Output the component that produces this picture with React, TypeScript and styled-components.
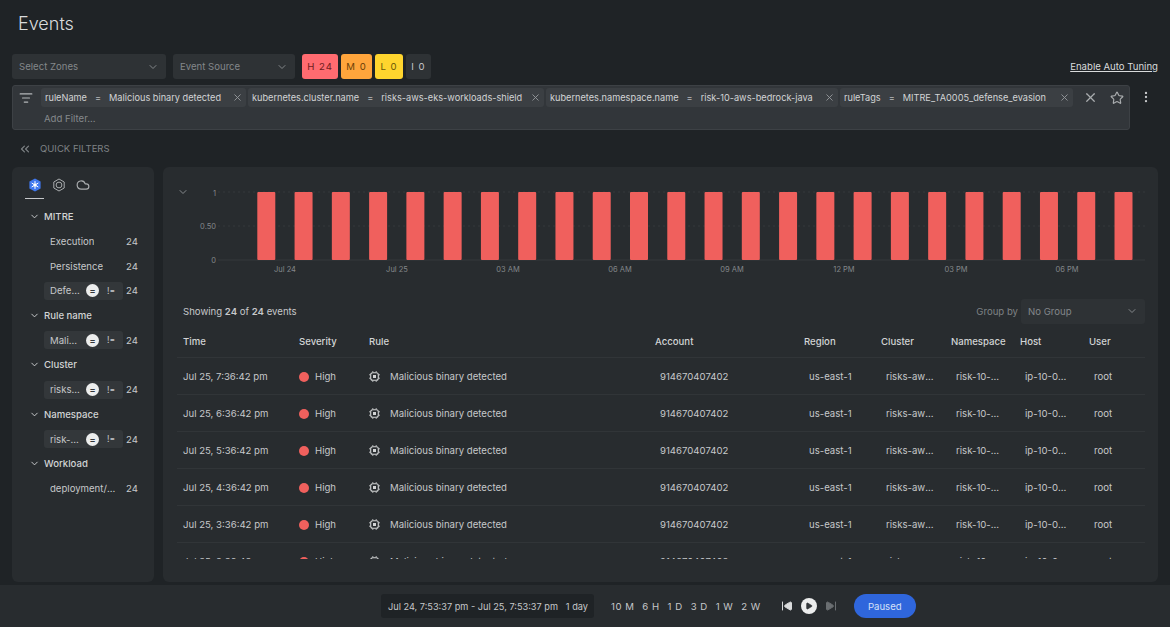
import React from 'react';
import styled, { createGlobalStyle } from 'styled-components';
import { ChevronDown, ChevronsLeft, Cloud, EllipsisVertical, ListFilter, Play, SkipBack, SkipForward, Star, X } from 'lucide-react';

const GlobalStyle = createGlobalStyle`
	html, body {
		margin: 0;
		background: #1f2326;
	}
	* {
		box-sizing: border-box;
	}
`;

const Page = styled.div`
	width: 1170px;
	height: 627px;
	overflow: hidden;
	display: flex;
	flex-direction: column;
	background: #1f2326;
	color: #c6c8ca;
	font-family: Inter, 'Liberation Sans', sans-serif;
	font-size: 9.6px;
`;

const Title = styled.h1`
	margin: 0;
	height: 54px;
	padding: 13px 0 0 18px;
	font-size: 18px;
	line-height: 22px;
	font-weight: 300;
	color: #d9dbdc;
`;

const Toolbar = styled.div`
	height: 25px;
	margin: 0 12px;
	display: flex;
	align-items: center;
	gap: 7px;
`;

const Select = styled.div<{ $width: number }>`
	width: ${p => p.$width}px;
	height: 25px;
	padding: 0 7px;
	display: flex;
	align-items: center;
	justify-content: space-between;
	background: #2e3235;
	border-radius: 3px;
	color: #83878a;
`;

const Badges = styled.div`
	display: flex;
	gap: 3px;
`;

const Badge = styled.div<{ $bg: string; $fg: string; $width: number }>`
	width: ${p => p.$width}px;
	height: 25px;
	display: flex;
	align-items: center;
	justify-content: center;
	background: ${p => p.$bg};
	color: ${p => p.$fg};
	border-radius: 3px;
	letter-spacing: 1px;
`;

const TuningLink = styled.a`
	margin-left: auto;
	color: #d9dbdc;
	text-decoration: underline;
`;

const FilterRow = styled.div`
	margin: 6px 12px 0;
	display: flex;
	align-items: flex-start;
`;

const FilterBar = styled.div`
	width: 1118px;
	height: 45px;
	padding: 2px 0 0 6px;
	display: flex;
	background: #32363a;
	border: 1px solid #3d4145;
	border-radius: 3px;
`;

const FilterIcon = styled.div`
	width: 22px;
	height: 19px;
	display: flex;
	align-items: center;
	color: #b4b7b9;
`;

const FilterBody = styled.div`
	display: flex;
	flex-direction: column;
`;

const Chips = styled.div`
	display: flex;
	gap: 2px;
`;

const Chip = styled.div<{ $width: number }>`
	width: ${p => p.$width}px;
	height: 19px;
	padding: 0 3px 0 4px;
	display: flex;
	align-items: center;
	background: #3b3f43;
	border-radius: 3px;
	color: #d2d4d5;
	font-size: 9.2px;
	white-space: nowrap;
`;

const ChipEquals = styled.span`
	margin: 0 8px;
	color: #b8babc;
`;

const ChipClose = styled.span`
	margin-left: auto;
	display: flex;
	color: #95989b;
`;

const AddFilter = styled.div`
	margin-top: 6px;
	padding-left: 3px;
	color: #85898c;
`;

const BarActions = styled.div`
	margin-left: 10px;
	height: 19px;
	display: flex;
	align-items: center;
	gap: 12px;
	color: #a9acae;
`;

const Kebab = styled.div`
	margin: 5px 0 0 9px;
	display: flex;
	color: #c6c8ca;
`;

const QuickFilters = styled.div`
	height: 37px;
	padding-left: 18px;
	display: flex;
	align-items: center;
	gap: 8px;
	color: #7e8285;
	font-size: 9.5px;
`;

const Main = styled.div`
	height: 415px;
	margin: 0 12px;
	display: flex;
	gap: 9px;
`;

const Sidebar = styled.aside`
	width: 142px;
	flex: none;
	padding: 11px 0 0;
	background: #282c2f;
	border-radius: 6px;
`;

const SourceTabs = styled.div`
	height: 21px;
	margin-left: 13px;
	display: flex;
	align-items: flex-start;
`;

const SourceTab = styled.div<{ $active?: boolean }>`
	width: 19px;
	height: 21px;
	margin-right: 5px;
	display: flex;
	justify-content: center;
	color: #a9acae;
	border-bottom: 1px solid ${p => (p.$active ? '#c6c8ca' : 'transparent')};
`;

const FacetList = styled.div`
	margin-top: 5.5px;
	display: grid;
	grid-auto-rows: 24.7px;
`;

const FacetTitle = styled.div`
	padding-left: 17px;
	display: flex;
	align-items: center;
	gap: 4px;
	color: #d2d4d5;
	font-weight: 500;
`;

const FacetItem = styled.div`
	padding-left: 32px;
	display: flex;
	align-items: center;
`;

const FacetValue = styled.div<{ $selected?: boolean }>`
	width: 79px;
	height: 18px;
	padding-left: 6px;
	display: flex;
	align-items: center;
	background: ${p => (p.$selected ? '#33373a' : 'transparent')};
	border-radius: 3px;
`;

const FacetLabel = styled.span<{ $selected?: boolean }>`
	width: ${p => (p.$selected ? '32px' : 'auto')};
	max-width: 66px;
	flex: none;
	overflow: hidden;
	white-space: nowrap;
	text-overflow: ellipsis;
`;

const EqualsButton = styled.span`
	width: 13px;
	height: 13px;
	margin-left: 4px;
	flex: none;
	display: flex;
	align-items: center;
	justify-content: center;
	border-radius: 50%;
	background: #eceded;
	color: #33373a;
	font-size: 9px;
	font-weight: 700;
`;

const NotEquals = styled.span`
	margin-left: 8px;
	font-size: 8.5px;
`;

const FacetCount = styled.span`
	margin-left: 3px;
`;

const Content = styled.section`
	flex: 1;
	min-width: 0;
	padding: 0 13px 23px 14px;
	display: flex;
	flex-direction: column;
	background: #282c2f;
	border-radius: 6px;
`;

const ChartArea = styled.div`
	height: 123px;
	position: relative;
	flex: none;
`;

const ChartToggle = styled.span`
	position: absolute;
	left: 0;
	top: 19px;
	display: flex;
	color: #85898c;
`;

const Summary = styled.div`
	height: 24px;
	margin-top: 9px;
	padding-left: 6px;
	flex: none;
	display: flex;
	align-items: center;
	b {
		font-weight: 600;
	}
`;

const GroupLabel = styled.span`
	margin-left: auto;
	margin-right: 3px;
	color: #7e8285;
`;

const Table = styled.div`
	flex: 1;
	min-height: 0;
	overflow: hidden;
`;

const Row = styled.div<{ $head?: boolean }>`
	height: ${p => (p.$head ? '35px' : '37px')};
	padding-top: ${p => (p.$head ? '2px' : '1px')};
	display: grid;
	grid-template-columns: 122px 70px 286px 149px 77px 70px 69px 69px 56px;
	align-items: center;
	border-bottom: 1px solid #313538;
	font-weight: ${p => (p.$head ? 500 : 400)};
	color: ${p => (p.$head ? '#d2d4d5' : '#c6c8ca')};
`;

const TimeCell = styled.div`
	padding-left: 6px;
`;

const SeverityCell = styled.div`
	display: flex;
	align-items: center;
	gap: 6px;
`;

const SeverityDot = styled.span`
	width: 10px;
	height: 10px;
	border-radius: 50%;
	background: #f0605d;
`;

const RuleCell = styled.div`
	display: flex;
	align-items: center;
	gap: 10px;
`;

const Cell = styled.div<{ $clip?: number }>`
	padding-left: 5px;
	padding-right: ${p => p.$clip ?? 0}px;
	overflow: hidden;
	white-space: nowrap;
	text-overflow: ellipsis;
`;

const HeadCell = styled.div``;

const Footer = styled.footer`
	height: 42px;
	margin-top: 3px;
	padding: 9px 0 0 381px;
	display: flex;
	align-items: flex-start;
	background: #282c2f;
`;

const RangeBox = styled.div`
	width: 213px;
	height: 24px;
	padding: 0 6px 0 7px;
	display: flex;
	align-items: center;
	justify-content: space-between;
	background: #1f2326;
	border-radius: 3px;
	font-size: 9.2px;
	white-space: nowrap;
`;

const Presets = styled.div`
	height: 24px;
	margin-left: 17px;
	display: flex;
	align-items: center;
	gap: 8px;
	letter-spacing: 0.5px;
`;

const Player = styled.div`
	height: 24px;
	margin-left: 20px;
	display: flex;
	align-items: center;
	gap: 8px;
	color: #d9dbdc;
`;

const PlayButton = styled.span`
	width: 16px;
	height: 16px;
	display: flex;
	align-items: center;
	justify-content: center;
	border-radius: 50%;
	background: #eceded;
	color: #33373a;
`;

const PausedButton = styled.button`
	width: 62px;
	height: 24px;
	margin-left: 17px;
	padding: 0;
	border: none;
	border-radius: 12px;
	background: #2f66dc;
	color: #d5e0f8;
	font: inherit;
`;

const K8sIcon = () => (
	<svg width='14' height='14' viewBox='0 0 14 14'>
		<path d='M7 .5l5.6 3.1v6.8L7 13.5 1.4 10.4V3.6z' fill='#3f78ee' />
		<g stroke='#fff' strokeWidth='1' strokeLinecap='round'>
			<path d='M7 3.5v7M4 5.2l6 3.6M10 5.2L4 8.8' />
		</g>
		<circle cx='7' cy='7' r='1.6' fill='#fff' />
	</svg>
);

const NutIcon = () => (
	<svg width='14' height='14' viewBox='0 0 14 14' fill='none' stroke='currentColor' strokeWidth='1'>
		<path d='M7 1l5.2 3v6L7 13l-5.2-3V4z' />
		<circle cx='7' cy='7' r='2.9' />
	</svg>
);

const RuleIcon = () => (
	<svg width='11' height='11' viewBox='0 0 11 11' fill='none' stroke='#d2d4d5'>
		<rect x='1.7' y='1.7' width='7.6' height='7.6' rx='2' strokeWidth='1.1' />
		<rect x='4' y='4' width='3' height='3' fill='#d2d4d5' stroke='none' />
		<path d='M3.8 0v1.4M7.2 0v1.4M3.8 9.6V11M7.2 9.6V11M0 3.8h1.4M0 7.2h1.4M9.6 3.8H11M9.6 7.2H11' strokeWidth='.8' />
	</svg>
);

const barCount = 24;
const chartTicks = [
	{ label: 'Jul 24', x: 108 },
	{ label: 'Jul 25', x: 220 },
	{ label: '03 AM', x: 331 },
	{ label: '06 AM', x: 443 },
	{ label: '09 AM', x: 555 },
	{ label: '12 PM', x: 667 },
	{ label: '03 PM', x: 779 },
	{ label: '06 PM', x: 890 }
];

const EventsChart = () => (
	<svg width='968' height='123' viewBox='0 0 968 123' fontFamily='Inter, sans-serif' fontSize='7.5' fill='#83878a'>
		{[25, 59, 93].map(y => (
			<line key={y} x1='41' x2='968' y1={y} y2={y} stroke='#35393c' strokeDasharray={y === 93 ? undefined : '2 3'} />
		))}
		<text x='39' y='28.5' textAnchor='end'>1</text>
		<text x='39' y='62' textAnchor='end'>0.50</text>
		<text x='39' y='96' textAnchor='end'>0</text>
		{Array.from({ length: barCount }, (_, i) => (
			<rect key={i} x={80.3 + i * 37.27} y='25' width='18' height='68' rx='1' fill='#f0605d' />
		))}
		{chartTicks.map(t => (
			<text key={t.label} x={t.x} y='105' textAnchor='middle'>{t.label}</text>
		))}
	</svg>
);

const filters = [
	{ name: 'ruleName', value: 'Malicious binary detected', width: 205 },
	{ name: 'kubernetes.cluster.name', value: 'risks-aws-eks-workloads-shield', width: 296 },
	{ name: 'kubernetes.namespace.name', value: 'risk-10-aws-bedrock-java', width: 292 },
	{ name: 'ruleTags', value: 'MITRE_TA0005_defense_evasion', width: 233 }
];

const facets = [
	{
		title: 'MITRE',
		items: [{ label: 'Execution' }, { label: 'Persistence' }, { label: 'Defense Evasion', selected: true }]
	},
	{ title: 'Rule name', items: [{ label: 'Malicious binary detected', selected: true }] },
	{ title: 'Cluster', items: [{ label: 'risks-aws-eks-workloads-shield', selected: true }] },
	{ title: 'Namespace', items: [{ label: 'risk-10-aws-bedrock-java', selected: true }] },
	{ title: 'Workload', items: [{ label: 'deployment/risk-10-aws-bedrock-java' }] }
];

const eventTimes = ['7:36:42', '6:36:42', '5:36:42', '4:36:42', '3:36:42', '2:36:42'];
const columns = ['Time', 'Severity', 'Rule', 'Account', 'Region', 'Cluster', 'Namespace', 'Host', 'User'];
const presets = ['10 M', '6 H', '1 D', '3 D', '1 W', '2 W'];

const App: React.FC = () => (
	<Page>
		<GlobalStyle />
		<Title>Events</Title>
		<Toolbar>
			<Select $width={154}>
				Select Zones
				<ChevronDown size={12} />
			</Select>
			<Select $width={122}>
				Event Source
				<ChevronDown size={12} />
			</Select>
			<Badges>
				<Badge $bg='#ff6b70' $fg='#6e1d20' $width={36}>H 24</Badge>
				<Badge $bg='#ffa53c' $fg='#6b3f08' $width={31}>M 0</Badge>
				<Badge $bg='#ffd52e' $fg='#6b5808' $width={28}>L 0</Badge>
				<Badge $bg='#2e3235' $fg='#c6c8ca' $width={25}>I 0</Badge>
			</Badges>
			<TuningLink>Enable Auto Tuning</TuningLink>
		</Toolbar>
		<FilterRow>
			<FilterBar>
				<FilterIcon>
					<ListFilter size={14} />
				</FilterIcon>
				<FilterBody>
					<Chips>
						{filters.map(f => (
							<Chip key={f.name} $width={f.width}>
								{f.name}
								<ChipEquals>=</ChipEquals>
								{f.value}
								<ChipClose>
									<X size={11} />
								</ChipClose>
							</Chip>
						))}
					</Chips>
					<AddFilter>Add Filter...</AddFilter>
				</FilterBody>
				<BarActions>
					<X size={15} />
					<Star size={14} />
				</BarActions>
			</FilterBar>
			<Kebab>
				<EllipsisVertical size={14} />
			</Kebab>
		</FilterRow>
		<QuickFilters>
			<ChevronsLeft size={14} />
			QUICK FILTERS
		</QuickFilters>
		<Main>
			<Sidebar>
				<SourceTabs>
					<SourceTab $active>
						<K8sIcon />
					</SourceTab>
					<SourceTab>
						<NutIcon />
					</SourceTab>
					<SourceTab>
						<Cloud size={14} />
					</SourceTab>
				</SourceTabs>
				<FacetList>
					{facets.map(facet => (
						<React.Fragment key={facet.title}>
							<FacetTitle>
								<ChevronDown size={11} />
								{facet.title}
							</FacetTitle>
							{facet.items.map((item: { label: string; selected?: boolean }) => (
								<FacetItem key={item.label}>
									<FacetValue $selected={item.selected}>
										<FacetLabel $selected={item.selected}>{item.label}</FacetLabel>
										{item.selected && <EqualsButton>=</EqualsButton>}
										{item.selected && <NotEquals>!=</NotEquals>}
									</FacetValue>
									<FacetCount>24</FacetCount>
								</FacetItem>
							))}
						</React.Fragment>
					))}
				</FacetList>
			</Sidebar>
			<Content>
				<ChartArea>
					<ChartToggle>
						<ChevronDown size={12} />
					</ChartToggle>
					<EventsChart />
				</ChartArea>
				<Summary>
					<span>
						Showing <b>24</b> of <b>24</b> events
					</span>
					<GroupLabel>Group by</GroupLabel>
					<Select $width={124}>
						No Group
						<ChevronDown size={12} />
					</Select>
				</Summary>
				<Table>
					<Row $head>
						{columns.map(c =>
							c === 'Time' ? <TimeCell key={c}>{c}</TimeCell> : <HeadCell key={c}>{c}</HeadCell>
						)}
					</Row>
					{eventTimes.map(time => (
						<Row key={time}>
							<TimeCell>Jul 25, {time} pm</TimeCell>
							<SeverityCell>
								<SeverityDot />
								High
							</SeverityCell>
							<RuleCell>
								<RuleIcon />
								Malicious binary detected
							</RuleCell>
							<Cell>914670407402</Cell>
							<Cell>us-east-1</Cell>
							<Cell $clip={14}>risks-aws-eks-workloads-shield</Cell>
							<Cell $clip={20}>risk-10-aws-bedrock-java</Cell>
							<Cell $clip={20}>ip-10-0-1-23.ec2.internal</Cell>
							<Cell>root</Cell>
						</Row>
					))}
				</Table>
			</Content>
		</Main>
		<Footer>
			<RangeBox>
				<span>Jul 24, 7:53:37 pm - Jul 25, 7:53:37 pm</span>
				<span>1 day</span>
			</RangeBox>
			<Presets>
				{presets.map(p => (
					<span key={p}>{p}</span>
				))}
			</Presets>
			<Player>
				<SkipBack size={12} fill='currentColor' />
				<PlayButton>
					<Play size={8} fill='currentColor' />
				</PlayButton>
				<SkipForward size={12} fill='#6a6e71' color='#6a6e71' />
			</Player>
			<PausedButton>Paused</PausedButton>
		</Footer>
	</Page>
);

export default App;
